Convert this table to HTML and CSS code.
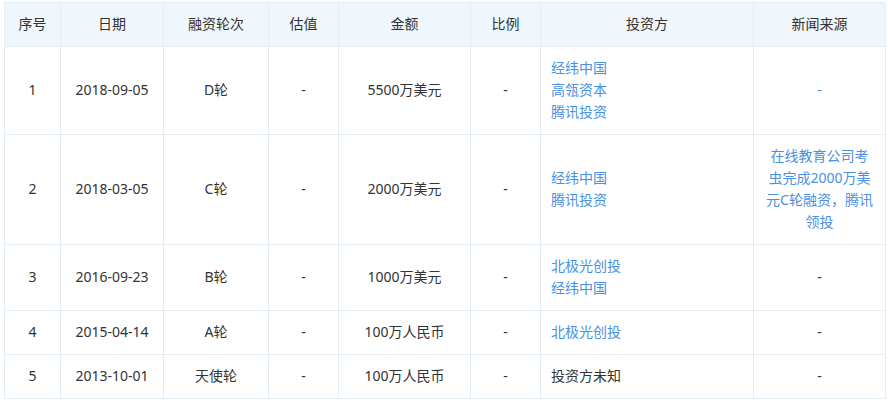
FILE: index.html
```html
<!DOCTYPE html>
<html lang="zh-CN">
<head>
<meta charset="utf-8">
<title>融资历程</title>
<link rel="stylesheet" href="styles.css">
</head>
<body>
<div class="wrap">
<table class="fin">
  <colgroup>
    <col class="c-no"><col class="c-date"><col class="c-round"><col class="c-val"><col class="c-amt"><col class="c-ratio"><col class="c-inv"><col class="c-news">
  </colgroup>
  <thead>
    <tr><th>序号</th><th>日期</th><th>融资轮次</th><th>估值</th><th>金额</th><th>比例</th><th>投资方</th><th>新闻来源</th></tr>
  </thead>
  <tbody>
    <tr>
      <td>1</td><td>2018-09-05</td><td>D轮</td><td>-</td><td>5500万美元</td><td>-</td>
      <td class="inv"><a class="link">经纬中国</a><br><a class="link">高瓴资本</a><br><a class="link">腾讯投资</a></td>
      <td class="news"><a class="link">-</a></td>
    </tr>
    <tr>
      <td>2</td><td>2018-03-05</td><td>C轮</td><td>-</td><td>2000万美元</td><td>-</td>
      <td class="inv"><a class="link">经纬中国</a><br><a class="link">腾讯投资</a></td>
      <td class="news"><a class="link">在线教育公司考虫完成2000万美元C轮融资，腾讯领投</a></td>
    </tr>
    <tr>
      <td>3</td><td>2016-09-23</td><td>B轮</td><td>-</td><td>1000万美元</td><td>-</td>
      <td class="inv"><a class="link">北极光创投</a><br><a class="link">经纬中国</a></td>
      <td class="news">-</td>
    </tr>
    <tr>
      <td>4</td><td>2015-04-14</td><td>A轮</td><td>-</td><td>100万人民币</td><td>-</td>
      <td class="inv"><a class="link">北极光创投</a></td>
      <td class="news">-</td>
    </tr>
    <tr>
      <td>5</td><td>2013-10-01</td><td>天使轮</td><td>-</td><td>100万人民币</td><td>-</td>
      <td class="inv">投资方未知</td>
      <td class="news">-</td>
    </tr>
  </tbody>
</table>
</div>
</body>
</html>
```
FILE: styles.css
```css
html, body {
  margin: 0;
  padding: 0;
  background: #ffffff;
}
.wrap {
  padding: 2px 0 0 4px;
}
.fin {
  border-collapse: collapse;
  table-layout: fixed;
  width: 882px;
  font-family: "Noto Sans", "Noto Sans CJK SC", sans-serif;
  font-size: 14px;
  line-height: 22px;
  color: #333333;
}
.c-no { width: 56px; }
.c-date { width: 103px; }
.c-round { width: 105px; }
.c-val { width: 70px; }
.c-amt { width: 132px; }
.c-ratio { width: 70px; }
.c-inv { width: 213px; }
.c-news { width: 132px; }
.fin th, .fin td {
  border: 1px solid #e3edf5;
  padding: 10px 10px 11px;
  text-align: center;
  vertical-align: middle;
  font-weight: normal;
}
.fin th {
  background: #f0f7fc;
  color: #333333;
}
.fin td.inv {
  text-align: left;
}
.fin td.news {
  padding-left: 11px;
  padding-right: 11px;
}
.link {
  color: #4a90e2;
  text-decoration: none;
}
```
